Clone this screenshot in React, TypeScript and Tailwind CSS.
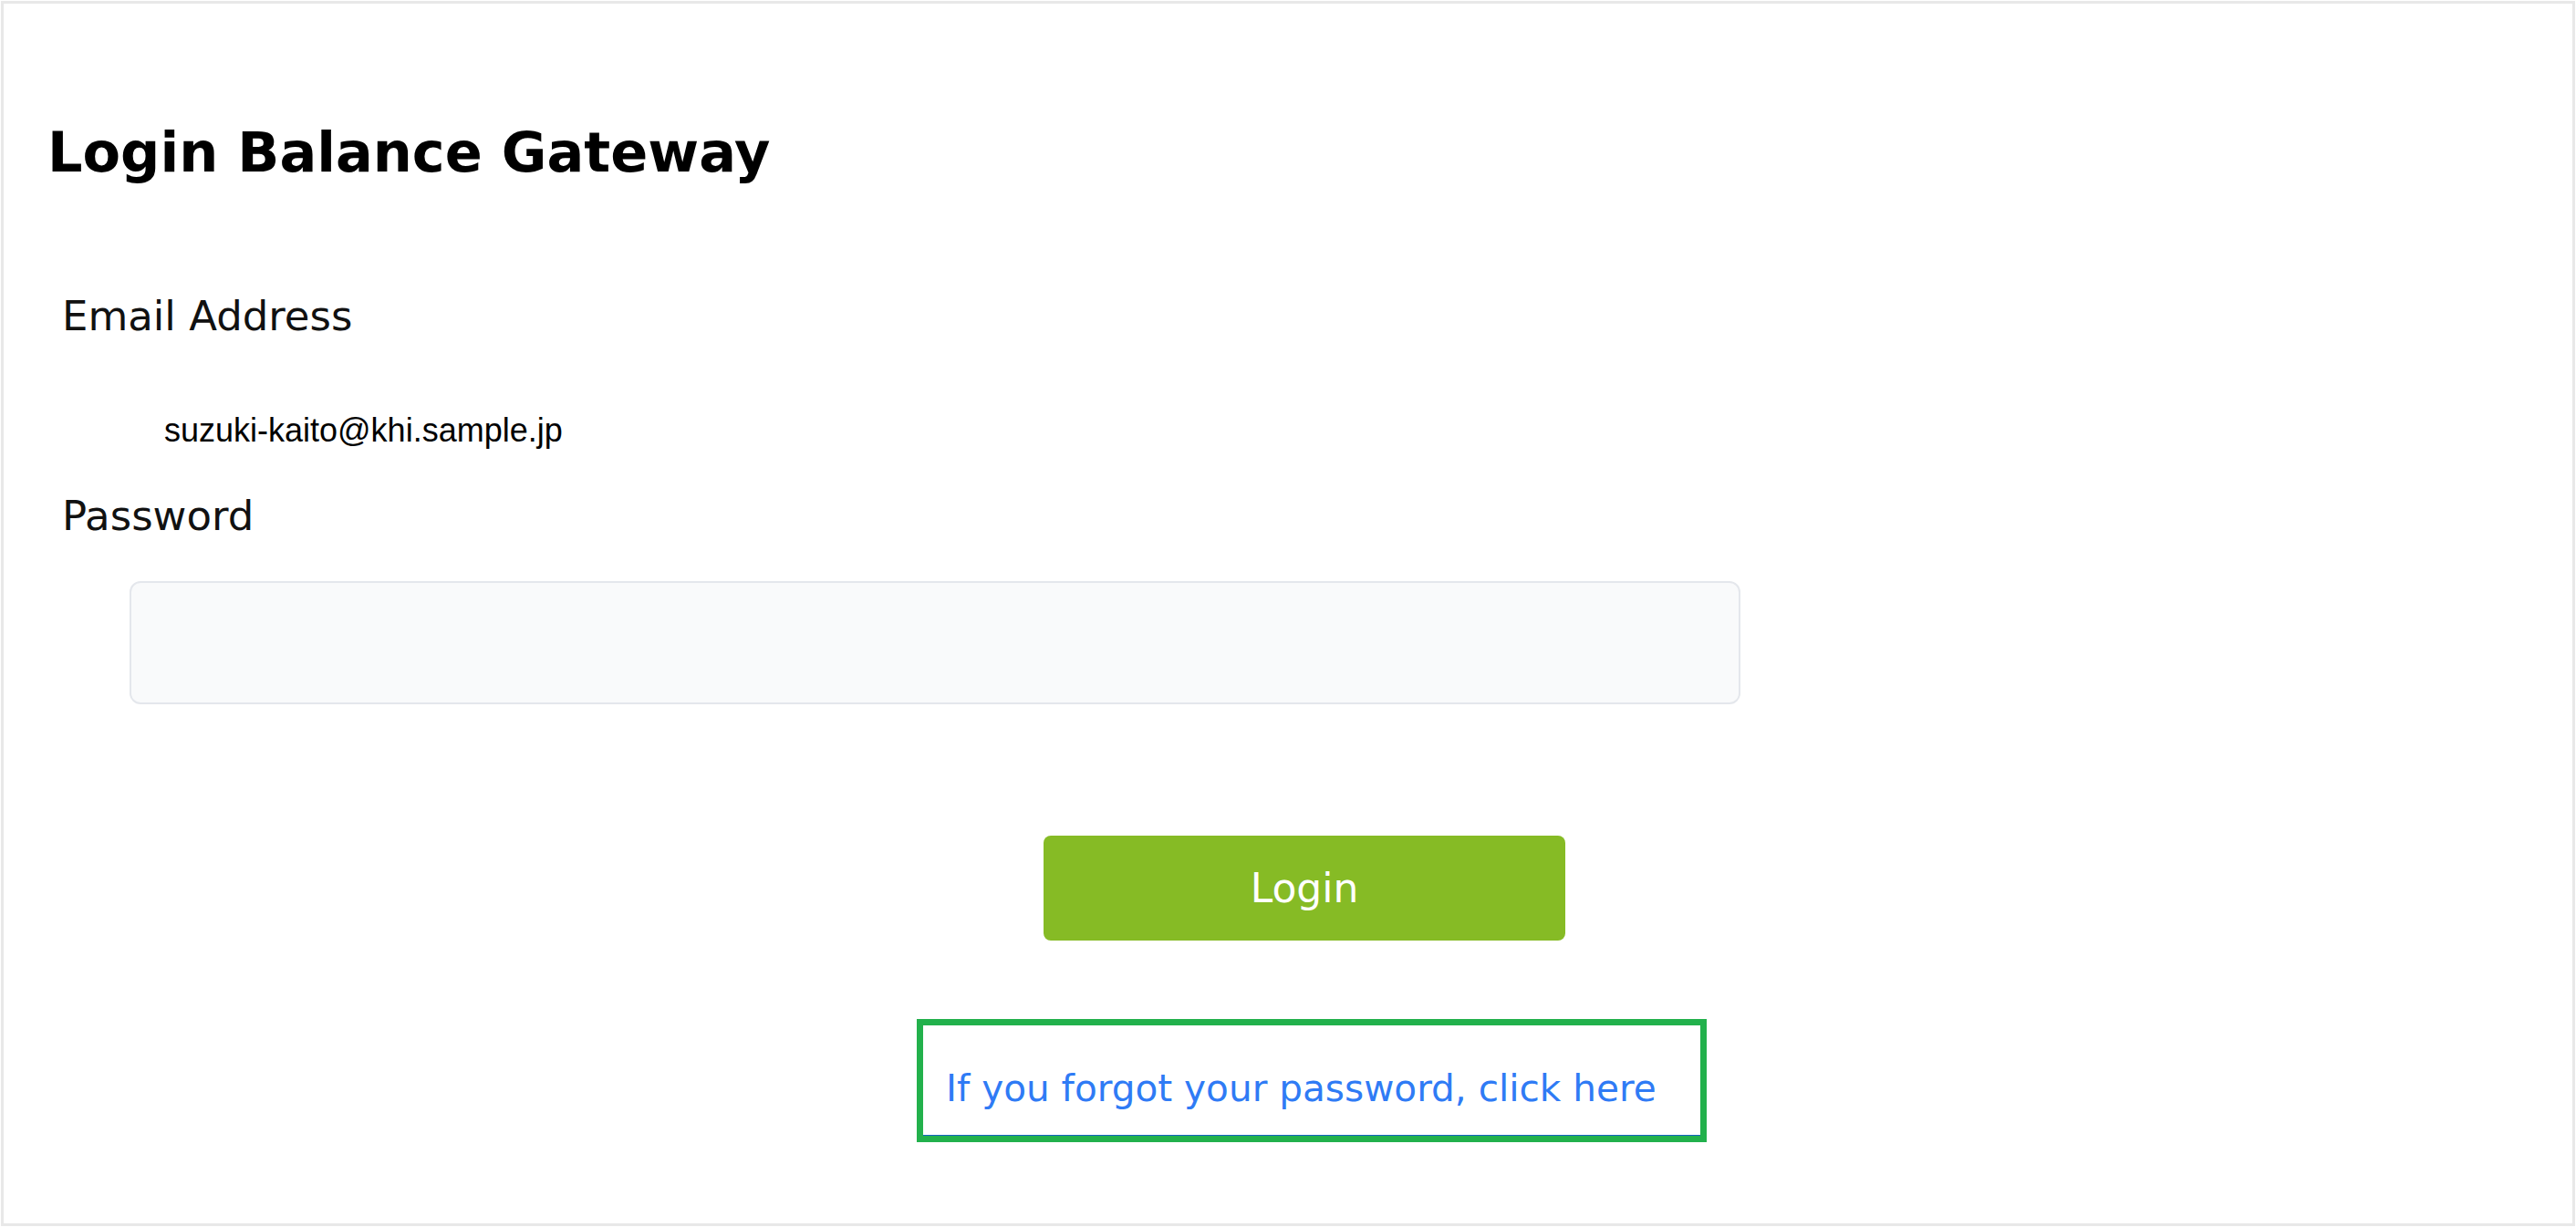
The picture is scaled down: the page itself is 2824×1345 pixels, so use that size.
export default function App() {
  return (
    <div className="min-h-screen bg-white p-px">
      <div className="h-[1343px] border-[3px] border-[#e8e8e8] bg-white font-['DejaVu_Sans',sans-serif] text-[#111]">
        <h1 className="pt-[133px] pl-[48px] text-[60.5px] leading-[60px] font-bold text-black">
          Login Balance Gateway
        </h1>

        <div className="mt-[128px] pl-[64px] text-[45px] leading-[44px]">Email Address</div>
        <div className="mt-[85px] pl-[176px] font-['Liberation_Sans',Arial,sans-serif] text-[36px] leading-[36px] text-black">
          suzuki-kaito@khi.sample.jp
        </div>

        <div className="mt-[54px] pl-[64px] text-[45px] leading-[44px]">Password</div>
        <div className="mt-[49px] ml-[138px] h-[135px] w-[1766px] rounded-[12px] border-2 border-[#e4e7ec] bg-[#f9fafb]" />

        <div className="mt-[144px] flex flex-col items-center pl-[36px]">
          <button className="flex h-[115px] w-[572px] items-center justify-center rounded-[8px] bg-[#86bb25] text-[44px] leading-[44px] text-white">
            Login
          </button>

          <div className="mt-[86px] ml-[16px] w-[866px] border-[7px] border-[#22b14c]">
            <div className="border-b border-[#1565c0] pt-[49px] pb-[31px] pl-[25px] text-[40.6px] leading-[40px] text-[#2f7bf5]">
              If you forgot your password, click here
            </div>
          </div>
        </div>
      </div>
    </div>
  );
}
